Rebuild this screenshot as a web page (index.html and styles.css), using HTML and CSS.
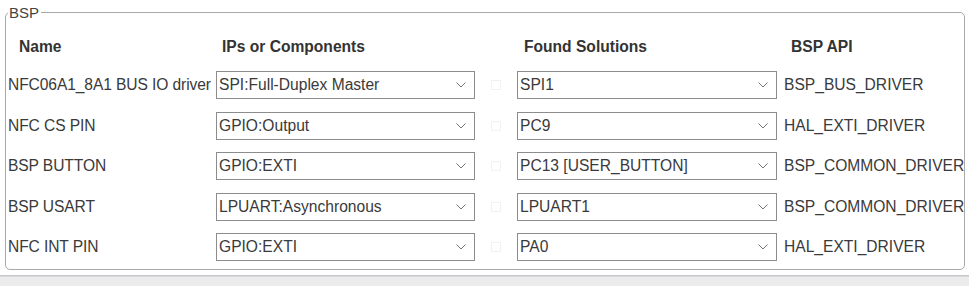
FILE: index.html
```html
<!DOCTYPE html>
<html>
<head>
<meta charset="utf-8">
<link rel="stylesheet" href="styles.css">
</head>
<body>
<div class="page">
  <fieldset class="bsp">
    <legend class="bsp-legend">BSP</legend>
    <div class="grid">
      <div class="hd hd-name">Name</div>
      <div class="hd hd-ip">IPs or Components</div>
      <div class="hd"></div>
      <div class="hd hd-found">Found Solutions</div>
      <div class="hd hd-api">BSP API</div>

      <div class="name">NFC06A1_8A1 BUS IO driver</div>
      <div class="combo"><span>SPI:Full-Duplex Master</span><svg class="chev" viewBox="0 0 10 6"><path d="M0.5 0.5 L5 5 L9.5 0.5"/></svg></div>
      <div class="chkcell"><span class="chk"></span></div>
      <div class="combo"><span>SPI1</span><svg class="chev" viewBox="0 0 10 6"><path d="M0.5 0.5 L5 5 L9.5 0.5"/></svg></div>
      <div class="api">BSP_BUS_DRIVER</div>

      <div class="name">NFC CS PIN</div>
      <div class="combo"><span>GPIO:Output</span><svg class="chev" viewBox="0 0 10 6"><path d="M0.5 0.5 L5 5 L9.5 0.5"/></svg></div>
      <div class="chkcell"><span class="chk"></span></div>
      <div class="combo"><span>PC9</span><svg class="chev" viewBox="0 0 10 6"><path d="M0.5 0.5 L5 5 L9.5 0.5"/></svg></div>
      <div class="api">HAL_EXTI_DRIVER</div>

      <div class="name">BSP BUTTON</div>
      <div class="combo"><span>GPIO:EXTI</span><svg class="chev" viewBox="0 0 10 6"><path d="M0.5 0.5 L5 5 L9.5 0.5"/></svg></div>
      <div class="chkcell"><span class="chk"></span></div>
      <div class="combo"><span>PC13 [USER_BUTTON]</span><svg class="chev" viewBox="0 0 10 6"><path d="M0.5 0.5 L5 5 L9.5 0.5"/></svg></div>
      <div class="api">BSP_COMMON_DRIVER</div>

      <div class="name">BSP USART</div>
      <div class="combo"><span>LPUART:Asynchronous</span><svg class="chev" viewBox="0 0 10 6"><path d="M0.5 0.5 L5 5 L9.5 0.5"/></svg></div>
      <div class="chkcell"><span class="chk"></span></div>
      <div class="combo"><span>LPUART1</span><svg class="chev" viewBox="0 0 10 6"><path d="M0.5 0.5 L5 5 L9.5 0.5"/></svg></div>
      <div class="api">BSP_COMMON_DRIVER</div>

      <div class="name">NFC INT PIN</div>
      <div class="combo"><span>GPIO:EXTI</span><svg class="chev" viewBox="0 0 10 6"><path d="M0.5 0.5 L5 5 L9.5 0.5"/></svg></div>
      <div class="chkcell"><span class="chk"></span></div>
      <div class="combo"><span>PA0</span><svg class="chev" viewBox="0 0 10 6"><path d="M0.5 0.5 L5 5 L9.5 0.5"/></svg></div>
      <div class="api">HAL_EXTI_DRIVER</div>
    </div>
  </fieldset>
  <div class="bottom-bar"></div>
</div>
</body>
</html>
```

FILE: styles.css
```css
html, body {
  margin: 0;
  padding: 0;
  background: #ffffff;
}
body {
  font-family: "Liberation Sans", Arial, sans-serif;
  font-size: 15.6px;
  color: #3a3a3a;
  width: 969px;
  height: 286px;
  overflow: hidden;
}
.page {
  display: flex;
  flex-direction: column;
  padding-top: 4px;
}
.bsp {
  margin: 0 4px 0 5px;
  padding: 5px 0 0 2px;
  border: 1px solid #a9a9a9;
  border-radius: 5px;
  box-sizing: border-box;
  height: 266px;
}
.bsp-legend {
  padding: 0 2px 0 1px;
  margin-left: 0;
  font-size: 15px;
  color: #444;
  line-height: 17px;
}
.grid {
  display: grid;
  grid-template-columns: 208px 259px 42px 260px 1fr;
  grid-template-rows: 39px repeat(5, 40.5px);
  align-items: center;
}
.hd {
  font-weight: bold;
  color: #333;
  padding-top: 2px;
}
.hd-name { padding-left: 11px; }
.hd-ip { padding-left: 6px; }
.hd-found { padding-left: 7px; }
.hd-api { padding-left: 14px; }
.name {
  white-space: nowrap;
  letter-spacing: -0.1px;
}
.combo {
  height: 26px;
  border: 1px solid #8c8c8c;
  display: flex;
  align-items: center;
  justify-content: space-between;
  padding: 0 8px 0 2px;
  background: #fff;
  white-space: nowrap;
}
.chev {
  width: 10px;
  height: 6px;
  fill: none;
  stroke: #777;
  stroke-width: 1;
}
.chkcell {
  display: flex;
  justify-content: center;
}
.chk {
  width: 8px;
  height: 8px;
  border: 1px solid #f2f2f2;
}
.api {
  padding-left: 7px;
  white-space: nowrap;
}
.bottom-bar {
  margin-top: 5px;
  height: 11px;
  border-top: 1px solid #c8c8c8;
  background: #ececec;
  box-shadow: inset 0 1px 0 #d6dadf;
}
```
